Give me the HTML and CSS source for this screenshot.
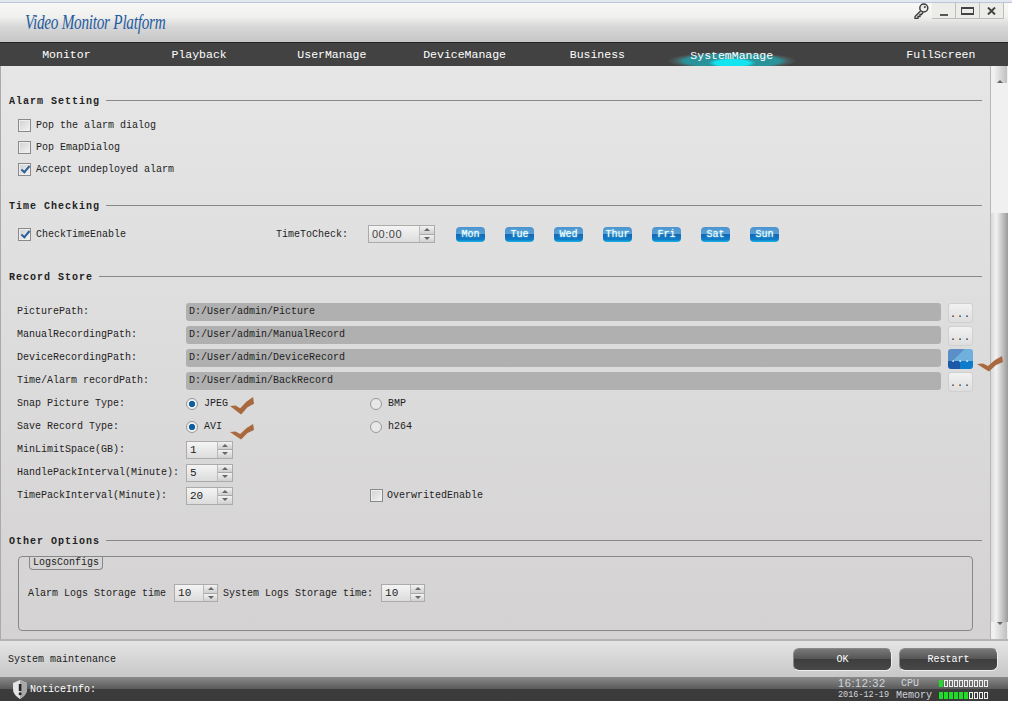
FILE: index.html
```html
<!DOCTYPE html>
<html lang="en">

<head>
    <meta charset="UTF-8">
    <title>Video Monitor Platform</title>
    <link rel="stylesheet" href="styles.css">
</head>

<body>
    <div class="top-edge"></div>
    <div class="window">
        <header class="titlebar">
            <div class="logo">Video Monitor Platform</div>
            <div class="win-btns">
                <svg class="key" width="16" height="16" viewBox="0 0 16 16"><path d="M7.5 8 L2 13.5 L2 15.5 L5 15.5 L5 13.5 L7 13.5 L7 11.5 L8.5 11.5 L10 9.5" fill="#d8d8d8" stroke="#3c3c3c" stroke-width="1.3"/><circle cx="10.8" cy="5" r="4" fill="#ececec" stroke="#3c3c3c" stroke-width="1.5"/><circle cx="11.8" cy="4" r="1" fill="#3c3c3c"/></svg>
                <div class="win-btn"><span class="min-ico"></span></div>
                <div class="win-btn"><span class="max-ico"></span></div>
                <div class="win-btn"><svg width="9" height="8" viewBox="0 0 9 8"><path d="M1 0.5 L8 7.5 M8 0.5 L1 7.5" stroke="#444" stroke-width="2"/></svg></div>
            </div>
        </header>

        <nav class="nav">
            <a>Monitor</a>
            <a>Playback</a>
            <a>UserManage</a>
            <a>DeviceManage</a>
            <a>Business</a>
            <a class="active">SystemManage</a>
            <a class="full">FullScreen</a>
        </nav>

        <div class="content">
            <main class="panel">
                <h2 class="sec-title"><span>Alarm Setting</span></h2>
                <label class="check-row"><i class="chk"></i>Pop the alarm dialog</label>
                <label class="check-row"><i class="chk"></i>Pop EmapDialog</label>
                <label class="check-row"><i class="chk on"></i>Accept undeployed alarm</label>

                <h2 class="sec-title time"><span>Time Checking</span></h2>
                <div class="time-row">
                    <label class="check-row time-chk"><i class="chk on"></i>CheckTimeEnable</label>
                    <span class="time-label">TimeToCheck:</span>
                    <div class="spin time-spin"><span class="val large">00:00</span><span class="arrows"><b class="up"></b><b class="down"></b></span></div>
                    <div class="days">
                        <span>Mon</span><span>Tue</span><span>Wed</span><span>Thur</span><span>Fri</span><span>Sat</span><span>Sun</span>
                    </div>
                </div>

                <h2 class="sec-title record"><span>Record Store</span></h2>
                <div class="form-row first-path"><span class="lbl">PicturePath:</span><div class="path">D:/User/admin/Picture</div><div class="dots">...</div></div>
                <div class="form-row"><span class="lbl">ManualRecordingPath:</span><div class="path">D:/User/admin/ManualRecord</div><div class="dots">...</div></div>
                <div class="form-row"><span class="lbl">DeviceRecordingPath:</span><div class="path">D:/User/admin/DeviceRecord</div><div class="dots hover">...</div></div>
                <div class="form-row"><span class="lbl">Time/Alarm recordPath:</span><div class="path">D:/User/admin/BackRecord</div><div class="dots">...</div></div>
                <div class="form-row"><span class="lbl">Snap Picture Type:</span><span class="opt"><i class="radio on"></i>JPEG</span><span class="opt"><i class="radio"></i>BMP</span></div>
                <div class="form-row"><span class="lbl">Save Record Type:</span><span class="opt"><i class="radio on"></i>AVI</span><span class="opt"><i class="radio"></i>h264</span></div>
                <div class="form-row"><span class="lbl">MinLimitSpace(GB):</span><div class="spin"><span class="val">1</span><span class="arrows"><b class="up"></b><b class="down"></b></span></div></div>
                <div class="form-row"><span class="lbl">HandlePackInterval(Minute):</span><div class="spin"><span class="val">5</span><span class="arrows"><b class="up"></b><b class="down"></b></span></div></div>
                <div class="form-row"><span class="lbl">TimePackInterval(Minute):</span><div class="spin"><span class="val">20</span><span class="arrows"><b class="up"></b><b class="down"></b></span></div><label class="check-row overwrite"><i class="chk"></i>OverwritedEnable</label></div>

                <h2 class="sec-title other"><span>Other Options</span></h2>
                <div class="group">
                    <div class="legend">LogsConfigs</div>
                    <div class="logs-row">
                        <span>Alarm Logs Storage time</span>
                        <div class="spin"><span class="val">10</span><span class="arrows"><b class="up"></b><b class="down"></b></span></div>
                        <span>System Logs Storage time:</span>
                        <div class="spin"><span class="val">10</span><span class="arrows"><b class="up"></b><b class="down"></b></span></div>
                    </div>
                </div>

                <svg class="tick tick-btn" width="26" height="16" viewBox="0 0 26 16"><path d="M0 8 L6 7.5 L11 10 L18 4 L25 0 L26 6 L19 9 L12 15.5 L7 12.5 Z" fill="#a8693f"/></svg>
                <svg class="tick tick-jpeg" width="24" height="18" viewBox="0 0 26 16" preserveAspectRatio="none"><path d="M0 8 L6 7.5 L11 10 L18 4 L25 0 L26 6 L19 9 L12 15.5 L7 12.5 Z" fill="#a8693f"/></svg>
                <svg class="tick tick-avi" width="24" height="16" viewBox="0 0 26 16" preserveAspectRatio="none"><path d="M0 8 L6 7.5 L11 10 L18 4 L25 0 L26 6 L19 9 L12 15.5 L7 12.5 Z" fill="#a8693f"/></svg>
            </main>

            <div class="scrollbar">
                <div class="sb-btn"><b class="up"></b></div>
                <div class="sb-track"><div class="sb-thumb"></div></div>
                <div class="sb-btn"><b class="down"></b></div>
            </div>
        </div>

        <div class="action-bar">
            <span>System maintenance</span>
            <div class="actions">
                <div class="dark-btn">OK</div>
                <div class="dark-btn">Restart</div>
            </div>
        </div>

        <footer class="status">
            <svg class="shield" width="16" height="19" viewBox="0 0 16 19"><path d="M8 0 L15 3 L15 9 C15 14 11 17 8 19 C5 17 1 14 1 9 L1 3 Z" fill="#e4e4e4"/><path d="M8 0 L15 3 L15 9 C15 14 11 17 8 19 Z" fill="#a8a8a8"/><rect x="6.8" y="4" width="2.6" height="7" fill="#222"/><rect x="6.8" y="12.5" width="2.6" height="2.6" fill="#222"/></svg>
            <span class="notice">NoticeInfo:</span>
            <div class="sys-info">
                <div class="sys-row"><span class="clock">16:12:32</span><span class="meter-name cpu">CPU</span><span class="meter"><i class="on"></i><i></i><i></i><i></i><i></i><i></i><i></i><i></i><i></i><i></i></span></div>
                <div class="sys-row"><span class="date">2016-12-19</span><span class="meter-name">Memory</span><span class="meter"><i class="on"></i><i class="on"></i><i class="on"></i><i class="on"></i><i class="on"></i><i class="on"></i><i></i><i></i><i></i><i></i></span></div>
            </div>
        </footer>
    </div>
</body>

</html>
```

FILE: styles.css
```css
* {
    box-sizing: border-box;
}

body {
    margin: 0;
    background: #fff;
    font-family: "Liberation Mono", monospace;
    font-size: 10px;
    color: #222;
}

.top-edge {
    height: 3px;
    background: #e2e7f0;
    border-bottom: 1px solid #bcc6d8;
}

.window {
    width: 1008px;
    height: 698px;
    display: flex;
    flex-direction: column;
    overflow: hidden;
}

/* title bar */
.titlebar {
    height: 39px;
    flex: none;
    display: flex;
    justify-content: space-between;
    background: linear-gradient(#f8f8f6, #f0f0ee 35%, #d8d8d8 60%, #c6c6c6);
}

.logo {
    margin: 7px 0 0 25px;
    font-family: "Liberation Serif", serif;
    font-style: italic;
    font-size: 21px;
    color: #1f5c9e;
    letter-spacing: -0.35px;
    white-space: nowrap;
    transform: scaleX(0.725);
    transform-origin: left;
}

.win-btns {
    display: flex;
    align-items: flex-start;
    margin-right: 4px;
}

.key {
    margin: 0 3px 0 0;
}

.win-btn {
    width: 24px;
    height: 16px;
    display: flex;
    align-items: center;
    justify-content: center;
    border: 1px solid #bdbdbd;
    border-top: none;
    border-left: none;
    background: #ecece9;
}

.min-ico {
    width: 8px;
    height: 2px;
    margin-top: 9px;
    background: #555;
}

.max-ico {
    width: 13px;
    height: 8px;
    border: 1px solid #444;
    border-top-width: 2px;
    border-bottom-width: 2px;
}

/* main menu */
.nav {
    height: 24px;
    flex: none;
    display: flex;
    background: #424242;
    border-top: 1px solid #222;
}

.nav a {
    width: 132.75px;
    flex: none;
    font-size: 11.5px;
    line-height: 23px;
    color: #fff;
    text-align: center;
}

.nav a.active {
    width: 136px;
    line-height: 26px;
    background:
        radial-gradient(ellipse 24px 5px at 50% 20px, #12e4f0 70%, transparent 100%),
        radial-gradient(ellipse 56px 8px at 50% 18px, #2a9299 85%, transparent 100%),
        radial-gradient(ellipse 65px 9px at 50% 18px, #4b5e60 85%, transparent 100%);
}

.nav a.full {
    width: 134.25px;
    margin-left: 74px;
}

/* settings area */
.content {
    flex: 1;
    display: flex;
    min-height: 0;
    border-left: 1px solid #aaa;
    border-bottom: 2px solid #b4b4b4;
    background: linear-gradient(#e6e6e6, #d4d2d2);
}

.panel {
    position: relative;
    flex: 1;
    padding: 27px 8px 0 8px;
}

.sec-title {
    display: flex;
    align-items: center;
    gap: 6px;
    height: 16px;
    margin: 0;
    font-size: 10px;
    font-weight: bold;
    color: #222;
    letter-spacing: 1px;
}

.sec-title::after {
    content: "";
    flex: 1;
    height: 1px;
    margin-top: -2px;
    background: #888;
}

.sec-title.time {
    margin-top: 18px;
}

.sec-title.record {
    margin-top: 23px;
}

.sec-title.other {
    margin-top: 26px;
}

.check-row {
    display: flex;
    align-items: center;
    height: 22px;
    padding-left: 9px;
}

.sec-title + .check-row {
    margin-top: 5px;
}

.chk {
    width: 13px;
    height: 13px;
    margin-right: 5px;
    border: 1px solid #8a8a8a;
    background: linear-gradient(135deg, #d0d0d0, #f4f4f4);
    box-shadow: inset 0 0 0 1px #eee;
    position: relative;
}

.chk.on::after {
    content: "";
    position: absolute;
    left: 4px;
    top: 0;
    width: 3px;
    height: 7px;
    border: solid #2a5f9a;
    border-width: 0 2px 2px 0;
    transform: rotate(40deg);
}

.time-row {
    display: flex;
    align-items: center;
    height: 24px;
    margin-top: 8px;
}

.time-chk {
    width: 267px;
}

.time-label {
    width: 92px;
}

.spin {
    width: 47px;
    height: 18px;
    display: flex;
    flex: none;
    border: 1px solid #ababab;
    background: linear-gradient(#f4f4f4, #dcdcdc);
}

.time-spin {
    width: 67px;
}

.val {
    flex: 1;
    padding-left: 3px;
    font-size: 11px;
    line-height: 17px;
}

.val.large {
    font-family: "Liberation Sans", sans-serif;
    letter-spacing: 0.5px;
    color: #444;
}

.arrows {
    width: 15px;
    display: flex;
    flex-direction: column;
    border-left: 1px solid #bbb;
}

.arrows b {
    flex: 1;
    display: flex;
    align-items: center;
    justify-content: center;
    background: linear-gradient(#f2f2f2, #cfcfcf);
    border-bottom: 1px solid #aaa;
}

.arrows b:last-child {
    border-bottom: none;
}

.up::after,
.down::after {
    content: "";
    border-left: 3px solid transparent;
    border-right: 3px solid transparent;
}

.up::after {
    border-bottom: 3px solid #666;
}

.down::after {
    border-top: 3px solid #666;
}

.days {
    display: flex;
    gap: 20px;
    margin-left: 21px;
}

.days span {
    width: 29px;
    height: 15px;
    border-radius: 4px;
    font-size: 10px;
    line-height: 15px;
    text-align: center;
    color: #fff;
    text-shadow: 0 0 2px #9ff;
    background: linear-gradient(#4d94cf, #5a9fd6 48%, #1668b4 50%, #0f7fca 85%, #19b6e6);
}

.form-row {
    display: flex;
    align-items: center;
    height: 23px;
    padding-left: 8px;
}

.first-path {
    margin-top: 15px;
}

.lbl {
    width: 169px;
    flex: none;
}

.path {
    width: 755px;
    height: 18px;
    padding-left: 3px;
    line-height: 18px;
    border-radius: 3px;
    background: #b0b0b0;
}

.dots {
    width: 25px;
    height: 20px;
    margin: 3px 0 0 7px;
    align-self: flex-start;
    border: 1px solid #d0d0d0;
    border-radius: 3px;
    text-align: center;
    line-height: 21px;
    letter-spacing: 1px;
    background: linear-gradient(#f2f2f2, #dedede);
}

.dots.hover {
    color: #fff;
    border: none;
    background:
        linear-gradient(135deg, #5a8fc8 45%, transparent 46%) top left / 100% 60% no-repeat,
        linear-gradient(90deg, #1a5aa8 50%, #0f7ccb 50%) bottom / 100% 40% no-repeat,
        #6fb0dd;
}

.opt {
    display: flex;
    align-items: center;
    width: 184px;
}

.radio {
    width: 12px;
    height: 12px;
    margin-right: 6px;
    border: 1px solid #999;
    border-radius: 50%;
    background: #e8e8e8;
}

.radio.on {
    background: radial-gradient(circle, #0f5f9f 0, #0f5f9f 40%, #eee 48%);
}

.overwrite {
    margin-left: 137px;
    padding-left: 0;
}

.overwrite .chk {
    margin-right: 4px;
}

.group {
    height: 75px;
    margin: 7px 9px 0 9px;
    padding: 0 9px;
    border: 1px solid #888;
    border-radius: 4px;
}

.legend {
    display: inline-block;
    height: 13px;
    margin-left: 1px;
    padding: 0 3px;
    line-height: 12px;
    font-size: 10px;
    border: 1px solid #888;
    border-top: none;
    border-radius: 0 0 4px 4px;
}

.logs-row {
    display: flex;
    align-items: center;
    margin-top: 14px;
}

.logs-row .spin {
    width: 44px;
    margin: 0 5px 0 8px;
}

.logs-row .arrows {
    width: 14px;
}

.tick {
    position: absolute;
}

.tick-btn {
    left: 976px;
    top: 290px;
}

.tick-jpeg {
    left: 229px;
    top: 331px;
}

.tick-avi {
    left: 229px;
    top: 358px;
}

.scrollbar {
    width: 18px;
    display: flex;
    flex-direction: column;
    background: #f0f0f0;
    border-left: 1px solid #b8b8b8;
}

.sb-btn {
    height: 17px;
    margin: 0 1px 0 2px;
    flex: none;
    display: flex;
    align-items: center;
    justify-content: center;
    background: linear-gradient(90deg, #f4f4f4, #c0c0c0);
}

.sb-track {
    flex: 1;
    padding-top: 130px;
}

.sb-thumb {
    height: 100%;
    background: linear-gradient(90deg, #d8d8d8, #f2f2f2 30%, #9a9a9a);
}

/* bottom bars */
.action-bar {
    height: 36px;
    flex: none;
    display: flex;
    align-items: center;
    justify-content: space-between;
    padding: 0 10px 0 8px;
    background: linear-gradient(#e4e4e4, #c8c8c8);
}

.actions {
    display: flex;
    gap: 7px;
}

.dark-btn {
    width: 99px;
    height: 23px;
    border-radius: 6px;
    text-align: center;
    line-height: 22px;
    color: #fff;
    background: linear-gradient(#787878, #555 48%, #3e3e3e 50%, #484848);
    border: 1px solid #eee;
    border-top-color: #888;
    border-left-color: #888;
}

.status {
    height: 24px;
    flex: none;
    display: flex;
    align-items: center;
    padding-left: 12px;
    color: #fff;
    background: linear-gradient(#8a8a8a, #5c5c5c 48%, #3c3c3c 52%, #3a3a3a);
}

.notice {
    margin-left: 2px;
}

.sys-info {
    margin-left: auto;
    margin-right: 20px;
}

.sys-row {
    display: flex;
    align-items: center;
    height: 12px;
    color: #d0d4da;
}

.clock,
.date {
    width: 50px;
    margin-right: 8px;
    white-space: nowrap;
}

.clock {
    font-size: 11px;
    font-family: "Liberation Sans", sans-serif;
    letter-spacing: 0.6px;
}

.date {
    font-size: 8.5px;
}

.meter-name {
    width: 43px;
}

.meter-name.cpu {
    padding-left: 5px;
}

.meter {
    display: flex;
    gap: 1px;
}

.meter i {
    width: 4px;
    height: 7px;
    border: 1px solid #eee;
}

.meter i.on {
    background: #1edc28;
    border-color: #1edc28;
}
```
